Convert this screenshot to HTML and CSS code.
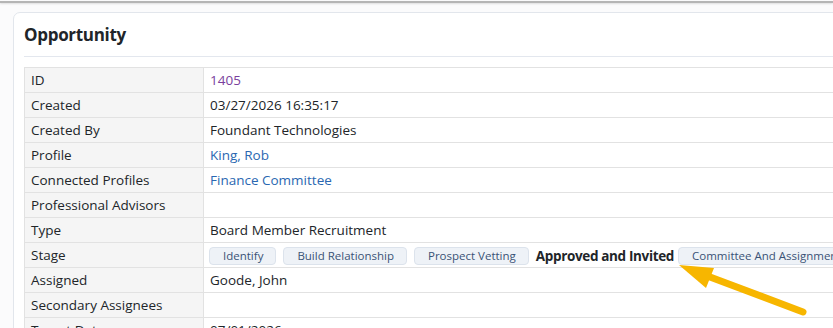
FILE: index.html
```html
<!DOCTYPE html>
<html>
<head>
<meta charset="utf-8">
<link rel="stylesheet" href="styles.css">
</head>
<body>
<div class="topbar"></div>
<div class="page">
  <div class="card">
    <h2 class="title">Opportunity</h2>
    <hr class="rule">
    <table class="details">
      <tr><th>ID</th><td><a class="visited" href="#">1405</a></td></tr>
      <tr><th>Created</th><td>03/27/2026 16:35:17</td></tr>
      <tr><th>Created By</th><td>Foundant Technologies</td></tr>
      <tr><th>Profile</th><td><a href="#">King, Rob</a></td></tr>
      <tr><th>Connected Profiles</th><td><a href="#">Finance Committee</a></td></tr>
      <tr><th>Professional Advisors</th><td></td></tr>
      <tr><th>Type</th><td>Board Member Recruitment</td></tr>
      <tr><th>Stage</th><td class="stagecell"><div class="stages"><span class="badge">Identify</span><span class="badge">Build Relationship</span><span class="badge">Prospect Vetting</span><span class="current">Approved and Invited</span><span class="badge">Committee And Assignment</span></div></td></tr>
      <tr><th>Assigned</th><td>Goode, John</td></tr>
      <tr><th>Secondary Assignees</th><td></td></tr>
      <tr><th>Target Date</th><td>07/01/2026</td></tr>
    </table>
  </div>
</div>
<svg class="arrow" width="833" height="328" viewBox="0 0 833 328">
  <line x1="803" y1="312" x2="702" y2="274" stroke="#f7b600" stroke-width="7" stroke-linecap="round"/>
  <polygon points="679,265 714,268 706,288" fill="#f7b600"/>
</svg>
</body>
</html>
```
FILE: styles.css
```css
html, body {
  margin: 0;
  padding: 0;
  overflow: hidden;
  background: #fbfbfc;
  font-family: "Open Sans", "Noto Sans", sans-serif;
  color: #212529;
}
.topbar {
  height: 2px;
  margin-top: 1px;
  background: #b5b5b5;
  box-shadow: 0 1px 2px rgba(0,0,0,0.12);
}
.page {
  padding: 9px 0 0 13px;
}
.card {
  width: 1000px;
  background: #fff;
  border: 1px solid #e2e6ec;
  border-radius: 7px;
  padding: 0 10px;
}
.title {
  margin: 0;
  padding: 11px 0 0 0;
  font-size: 17px;
  font-weight: 700;
  line-height: 22px;
  height: 32px;
  letter-spacing: -0.3px;
}
.rule {
  border: 0;
  border-top: 1px solid #e3e7ee;
  margin: 0 0 10px 0;
}
.details {
  border-collapse: collapse;
  width: 100%;
  font-size: 13.5px;
}
.details th, .details td {
  border: 1px solid #e2e2e2;
  height: 24px;
  padding: 0 6px;
  text-align: left;
  font-weight: 400;
  vertical-align: middle;
  white-space: nowrap;
}
.details th {
  width: 166px;
  background: #f5f5f5;
}
.details td.stagecell {
  padding: 0 5px;
}
.details a {
  color: #2a67b1;
  text-decoration: none;
}
.details a.visited {
  color: #7a3f9d;
}
.stages {
  display: flex;
  align-items: center;
  gap: 7px;
  height: 24px;
  padding-top: 1px;
  box-sizing: border-box;
}
.badge {
  display: inline-block;
  font-size: 11.5px;
  color: #3a5276;
  background: #eef2f7;
  border: 1px solid #dce3ec;
  border-radius: 4px;
  padding: 0 12px 0 13px;
  line-height: 16px;
}
.current {
  font-weight: 700;
  font-size: 13.5px;
  letter-spacing: -0.35px;
  margin: 0 -3px 0 0;
}
.arrow {
  position: absolute;
  left: 0;
  top: 0;
  pointer-events: none;
}
```
